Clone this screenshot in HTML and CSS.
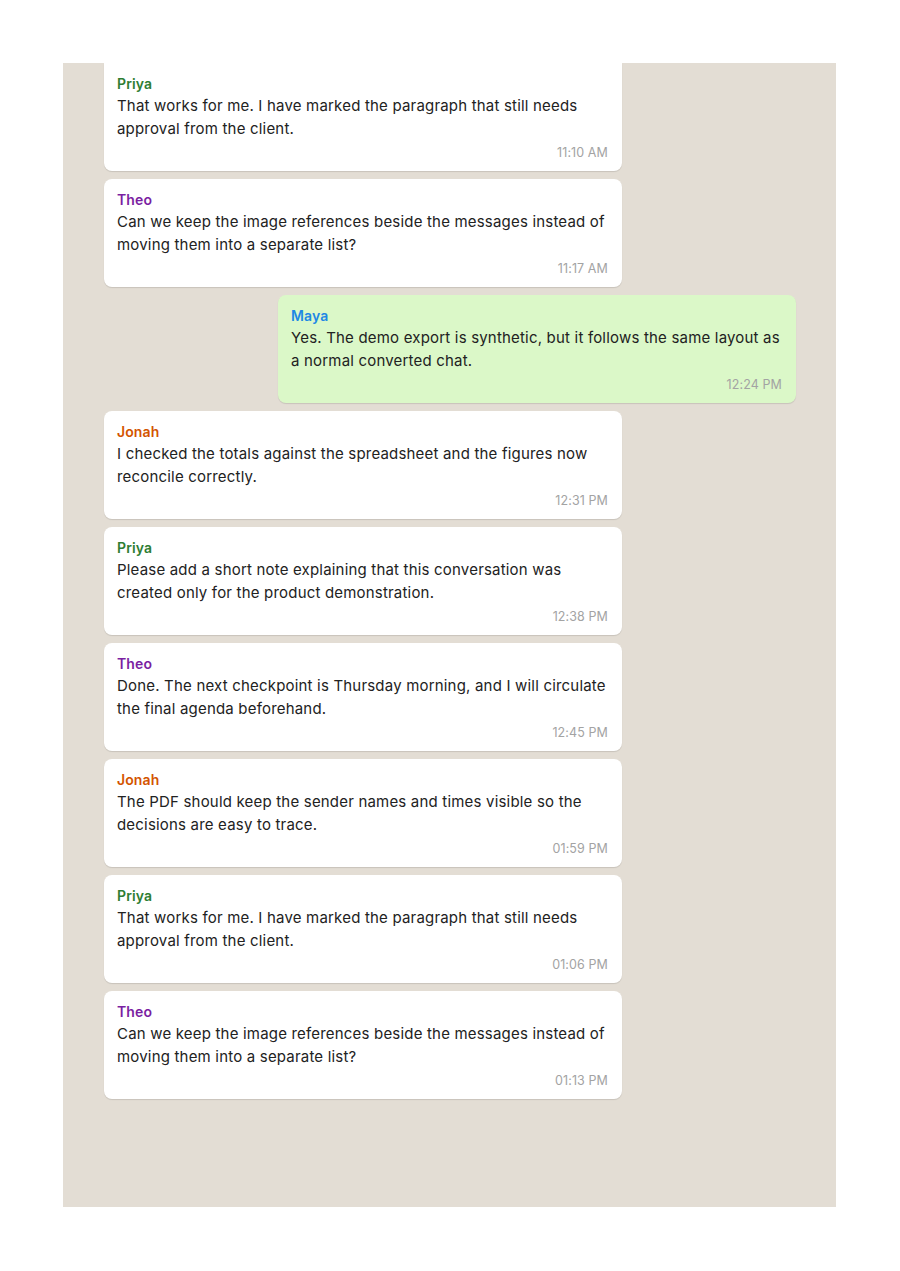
FILE: index.html
```html
<!DOCTYPE html>
<html lang="en">
<head>
    <meta charset="UTF-8">
    <meta name="viewport" content="width=device-width, initial-scale=1.0">
    <title>Chat export</title>
    <link rel="stylesheet" href="styles.css">
</head>
<body>
    <div class="chat">
        <div class="msg cont">
            <div class="sender priya">Priya</div>
            <div class="text">That works for me. I have marked the paragraph that still needs approval from the client.</div>
            <div class="time">11:10 AM</div>
        </div>
        <div class="msg">
            <div class="sender theo">Theo</div>
            <div class="text">Can we keep the image references beside the messages instead of moving them into a separate list?</div>
            <div class="time">11:17 AM</div>
        </div>
        <div class="msg own">
            <div class="sender maya">Maya</div>
            <div class="text">Yes. The demo export is synthetic, but it follows the same layout as a normal converted chat.</div>
            <div class="time">12:24 PM</div>
        </div>
        <div class="msg">
            <div class="sender jonah">Jonah</div>
            <div class="text">I checked the totals against the spreadsheet and the figures now reconcile correctly.</div>
            <div class="time">12:31 PM</div>
        </div>
        <div class="msg">
            <div class="sender priya">Priya</div>
            <div class="text">Please add a short note explaining that this conversation was created only for the product demonstration.</div>
            <div class="time">12:38 PM</div>
        </div>
        <div class="msg">
            <div class="sender theo">Theo</div>
            <div class="text">Done. The next checkpoint is Thursday morning, and I will circulate the final agenda beforehand.</div>
            <div class="time">12:45 PM</div>
        </div>
        <div class="msg">
            <div class="sender jonah">Jonah</div>
            <div class="text">The PDF should keep the sender names and times visible so the decisions are easy to trace.</div>
            <div class="time">01:59 PM</div>
        </div>
        <div class="msg">
            <div class="sender priya">Priya</div>
            <div class="text">That works for me. I have marked the paragraph that still needs approval from the client.</div>
            <div class="time">01:06 PM</div>
        </div>
        <div class="msg">
            <div class="sender theo">Theo</div>
            <div class="text">Can we keep the image references beside the messages instead of moving them into a separate list?</div>
            <div class="time">01:13 PM</div>
        </div>
    </div>
</body>
</html>
```

FILE: styles.css
```css
body {
    margin: 0;
    padding: 63px 64px 64px 63px;
    background-color: #fff;
    font-family: Inter, 'Noto Sans', sans-serif;
    color: #222;
}

.chat {
    background-color: #e3ddd4; /* beige chat wallpaper */
    height: 1144px;
    padding: 0 40px 0 41px;
    display: flex;
    flex-direction: column;
    gap: 8px;
    overflow: hidden;
}

.msg {
    width: 518px;
    box-sizing: border-box;
    padding: 10px 14px 10px 13px;
    background-color: #fff;
    border-radius: 8px;
    box-shadow: 0 1px 1px rgba(0, 0, 0, 0.12);
}

/* continued from previous page */
.msg.cont {
    border-top-left-radius: 0;
    border-top-right-radius: 0;
}

.msg.own {
    align-self: flex-end;
    background-color: #dbf8c8;
}

.sender {
    font-size: 14px;
    font-weight: 600;
    line-height: 21px;
    letter-spacing: 0.1px;
}

.priya { color: #2e7d32; }
.theo { color: #7b1fa2; }
.maya { color: #1e88e5; }
.jonah { color: #d35400; }

.text {
    font-size: 15px;
    line-height: 23px;
    letter-spacing: 0.19px;
}

.time {
    margin-top: 5px;
    font-size: 12.5px;
    line-height: 16px;
    letter-spacing: 0.1px;
    color: #a3a3a3;
    text-align: right;
}
```
